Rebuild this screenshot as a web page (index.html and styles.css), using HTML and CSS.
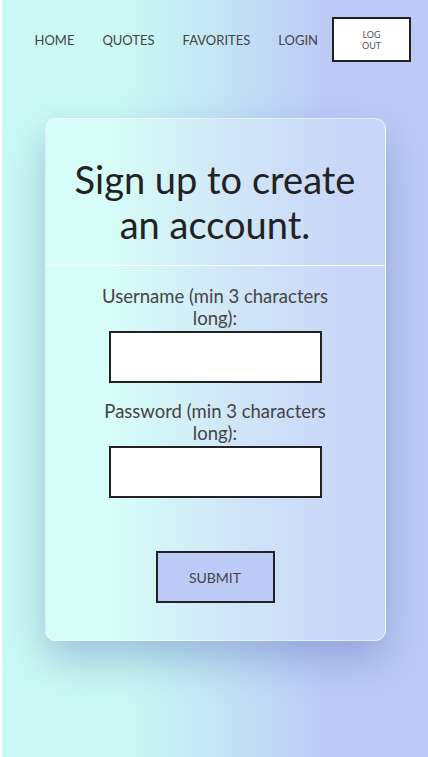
FILE: index.html
```html
<!DOCTYPE html>
<html lang="en">
<head>
<meta charset="utf-8">
<title>Sign up</title>
<link rel="stylesheet" href="styles.css">
</head>
<body>
<div class="page">
  <header class="nav">
    <a class="nav-link" href="#">HOME</a>
    <a class="nav-link" href="#">QUOTES</a>
    <a class="nav-link" href="#">FAVORITES</a>
    <a class="nav-link" href="#">LOGIN</a>
    <button class="logout" type="button">LOG OUT</button>
  </header>
  <main class="card">
    <h1 class="title">Sign up to create an account.</h1>
    <form class="form">
      <label class="label" for="u">Username (min 3 characters long):</label>
      <input class="field" id="u" type="text">
      <label class="label second" for="p">Password (min 3 characters long):</label>
      <input class="field" id="p" type="password">
      <button class="submit" type="button">SUBMIT</button>
    </form>
  </main>
</div>
</body>
</html>
```
FILE: styles.css
```css
* { box-sizing: border-box; }
html, body { margin: 0; padding: 0; height: 100%; }
body {
  font-family: Lato, "Open Sans", sans-serif;
  color: #444;
}
.page {
  min-height: 100%;
  border-left: 2px solid #fff;
  background: linear-gradient(to right, #cafaf3 28%, #c4e6f5 50%, #bccbf6 76%);
  display: flex;
  flex-direction: column;
  align-items: center;
  padding-bottom: 40px;
}
.nav {
  align-self: stretch;
  display: flex;
  align-items: center;
  justify-content: flex-end;
  padding: 17px 17px 0 0;
  height: 62px;
}
.nav-link {
  font-size: 13px;
  color: #444;
  text-decoration: none;
  padding: 0 14px;
}
.logout {
  width: 79px;
  height: 45px;
  background: #fff;
  border: 2px solid #222;
  font-family: Lato, sans-serif;
  font-size: 9px;
  line-height: 11px;
  color: #555;
  padding: 0 24px;
  margin: 0;
}
.card {
  margin-top: 56px;
  width: 341px;
  height: 523px;
  border-radius: 11px;
  border: 1px solid rgba(255,255,255,0.5);
  background: linear-gradient(to right, #d6fdf7 20%, #d0e6f7 55%, #c8d6f8 90%);
  box-shadow: 0 18px 40px rgba(70, 90, 170, 0.35);
  display: flex;
  flex-direction: column;
}
.title {
  margin: 0;
  padding: 38px 28px 18px;
  font-size: 38px;
  line-height: 45px;
  font-weight: 400;
  text-align: center;
  color: #222;
  border-bottom: 1px solid #fff;
}
.form {
  display: flex;
  flex-direction: column;
  align-items: center;
  padding-top: 19px;
}
.label {
  width: 245px;
  text-align: center;
  font-size: 18.5px;
  line-height: 22px;
  color: #444;
  margin-bottom: 2px;
}
.label.second { margin-top: 17px; }
.field {
  width: 213px;
  height: 52px;
  border: 2px solid #222;
  background: #fff;
  margin: 0;
}
.submit {
  margin-top: 53px;
  width: 119px;
  height: 52px;
  background: #bccbf6;
  border: 2px solid #222;
  font-family: Lato, sans-serif;
  font-size: 14px;
  color: #444;
}
```
